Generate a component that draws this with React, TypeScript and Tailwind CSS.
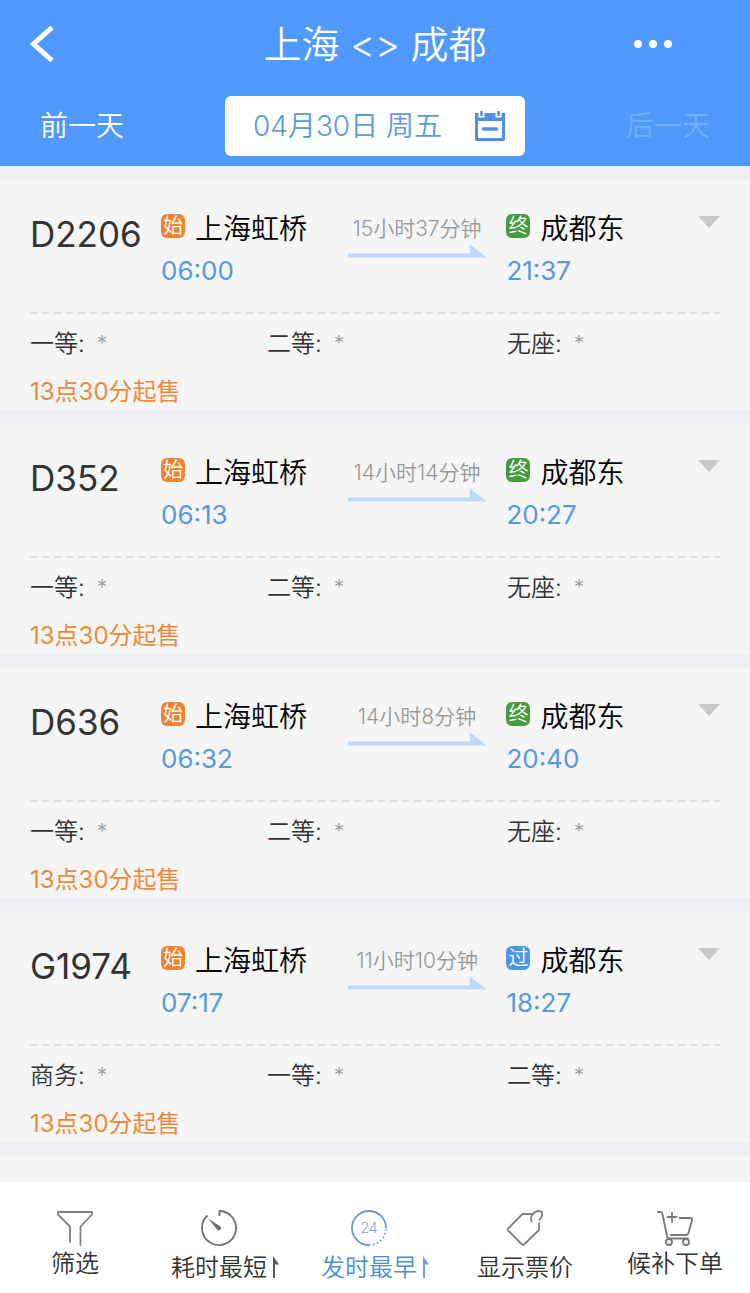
import type { ReactNode } from 'react';

type Train = {
  code: string;
  from: string;
  depart: string;
  duration: string;
  stop: '终' | '过';
  to: string;
  arrive: string;
  seats: string[];
};

const trains: Train[] = [
  { code: 'D2206', from: '上海虹桥', depart: '06:00', duration: '15小时37分钟', stop: '终', to: '成都东', arrive: '21:37', seats: ['一等', '二等', '无座'] },
  { code: 'D352', from: '上海虹桥', depart: '06:13', duration: '14小时14分钟', stop: '终', to: '成都东', arrive: '20:27', seats: ['一等', '二等', '无座'] },
  { code: 'D636', from: '上海虹桥', depart: '06:32', duration: '14小时8分钟', stop: '终', to: '成都东', arrive: '20:40', seats: ['一等', '二等', '无座'] },
  { code: 'G1974', from: '上海虹桥', depart: '07:17', duration: '11小时10分钟', stop: '过', to: '成都东', arrive: '18:27', seats: ['商务', '一等', '二等'] },
];

function Badge({ color, children }: { color: string; children: ReactNode }) {
  return (
    <span className={`mb-1.5 flex h-6 w-6 shrink-0 items-center justify-center rounded-md text-xl leading-6 text-white ${color}`}>
      {children}
    </span>
  );
}

function Station({ badge, color, name, time }: { badge: string; color: string; name: string; time: string }) {
  return (
    <div>
      <div className="flex h-[42px] items-center gap-2.5">
        <Badge color={color}>{badge}</Badge>
        <span className="whitespace-nowrap text-[28px] leading-10 text-black">{name}</span>
      </div>
      <div className="mt-px text-[26px] leading-10 font-normal text-[#5699e0]">{time}</div>
    </div>
  );
}

function TrainCard({ train }: { train: Train }) {
  return (
    <li className="bg-[#f5f5f5] px-[30px] pt-7 pb-0.5">
      <div className="grid grid-cols-[131px_187fr_159fr_214fr]">
        <h2 className="mt-1.5 text-[35px] leading-10 font-normal text-[#333]">{train.code}</h2>
        <Station badge="始" color="bg-[#ec8434]" name={train.from} time={train.depart} />
        <div className="mr-5 flex flex-col items-center pt-1.5">
          <span className="whitespace-nowrap text-[21px] leading-[30px] text-[#999]">{train.duration}</span>
          <svg className="h-[14px] w-full" viewBox="0 0 139 14" preserveAspectRatio="none" fill="#c0d9f9" aria-hidden="true">
            <path d="M0 9.500H122V0L139 13.500H0z" />
          </svg>
        </div>
        <div className="flex justify-between">
          <Station
            badge={train.stop}
            color={train.stop === '终' ? 'bg-[#469a40]' : 'bg-[#4f94e6]'}
            name={train.to}
            time={train.arrive}
          />
          <button type="button" aria-label="展开" className="mt-2 h-3 w-[22px]">
            <svg className="h-3 w-[22px]" viewBox="0 0 22 12" fill="#c8c8c8">
              <path d="M0 0h22L11 12z" />
            </svg>
          </button>
        </div>
      </div>

      <div className="mt-[21px] h-0.5 bg-[repeating-linear-gradient(to_right,#dfdfdf_0_7px,transparent_7px_12px)]" />

      <ul className="mt-3.5 grid grid-cols-[237fr_240fr_213fr]">
        {train.seats.map((seat) => (
          <li key={seat} className="flex gap-3 text-2xl leading-8 text-[#333]">
            <span>{seat}:</span>
            <span className="text-[21px] leading-8 text-[#999]">*</span>
          </li>
        ))}
      </ul>
      <p className="mt-4 text-2xl leading-8 font-normal text-[#ec8a3c]">13点30分起售</p>
    </li>
  );
}

function SortMark() {
  return (
    <svg className="mb-3 h-[22px] w-1.5 opacity-80" viewBox="0 0 6 22" fill="currentColor" aria-hidden="true">
      <path d="M0 0l6 8.500H2V22H0z" />
    </svg>
  );
}

function NavItem({ icon, label, active, sort, compact }: { icon: ReactNode; label: string; active?: boolean; sort?: boolean; compact?: boolean }) {
  return (
    <button type="button" className={`flex items-end justify-center gap-1.5 self-start pt-7 ${active ? 'text-[#4c8ddc]' : 'text-[#333]'}`}>
      <span className="flex flex-col items-center">
        {icon}
        <span className={`whitespace-nowrap text-2xl ${compact ? 'leading-9' : 'leading-[44px]'}`}>{label}</span>
      </span>
      {sort && <SortMark />}
    </button>
  );
}

const iconClass = 'h-9 w-9';

function FunnelIcon() {
  return (
    <svg className={iconClass} viewBox="0 0 36 36" fill="none" stroke="#808080" strokeWidth="1.800" strokeLinecap="round" strokeLinejoin="round">
      <path d="M13 32V16.500L1.500 5Q-0.500 2 2 2H34Q36.500 2 34.500 5L23.500 16.500V35" />
    </svg>
  );
}

function TimerIcon() {
  return (
    <svg className={iconClass} viewBox="0 0 36 36" fill="none" stroke="#707070" strokeWidth="1.800">
      <path d="M18.500 6V1A17 17 0 1 1 6.500 5.500" />
      <path d="M7 8.500L16 19.500A2.300 2.300 0 1 0 19.500 16.500z" fill="#707070" stroke="none" />
    </svg>
  );
}

function ClockIcon() {
  return (
    <svg className={iconClass} viewBox="0 0 36 36" fill="none" stroke="#6d96dc" strokeWidth="1.800">
      <path d="M35 18A17 17 0 1 0 18 35" />
      <path d="M18 35A17 17 0 0 0 35 18" strokeDasharray="1.500 2.500" />
      <text x="18" y="23" textAnchor="middle" fontSize="14" fill="#7d9fdf" stroke="none">24</text>
    </svg>
  );
}

function TagIcon() {
  return (
    <svg className={iconClass} viewBox="0 0 36 36" fill="none" stroke="#808080" strokeWidth="1.800" strokeLinecap="round" strokeLinejoin="round">
      <path d="M25.500 4H15.500L1.500 18Q0 19.500 1.500 21L14.500 34Q16 35.500 17.500 34L32 20V13" />
      <path d="M24.500 11.500C22.500 7 27 1 31.500 1C36 1 36.500 6 32.500 9.500" />
    </svg>
  );
}

function CartIcon() {
  return (
    <svg className={iconClass} viewBox="0 0 36 36" fill="none" stroke="#777" strokeWidth="1.800" strokeLinecap="round" strokeLinejoin="round">
      <path d="M1 2H3.500Q5 2 5.500 4L10 26Q10.500 28.500 12 28.500H31" />
      <path d="M22.500 8H33Q35.500 8 35 10L31.500 23Q31 25 29 25H14" />
      <path d="M15 2.500V12M10.500 7H19.500" />
      <circle cx="12" cy="32" r="3" />
      <circle cx="29" cy="32" r="3" />
    </svg>
  );
}

export default function App() {
  return (
    <div className="flex min-h-screen flex-col bg-[#eeeef3] font-['Inter','Noto_Sans_CJK_SC',sans-serif] font-[350]">
      {/* Header */}
      <header className="bg-[#4f99ff] pb-2.5 text-white">
        <div className="grid h-[88px] grid-cols-[1fr_auto_1fr] items-center px-[30px]">
          <button type="button" aria-label="返回" className="justify-self-start">
            <svg className="h-9 w-6" viewBox="0 0 24 36" fill="none" stroke="currentColor" strokeWidth="5">
              <path d="M22 1.500L3.500 18L22 34.500" />
            </svg>
          </button>
          <h1 className="whitespace-nowrap text-[38px] leading-[56px]">上海 &lt;&gt; 成都</h1>
          <button type="button" aria-label="更多" className="mr-12 flex gap-[7px] justify-self-end">
            <span className="h-2 w-2 rounded-full bg-white" />
            <span className="h-2 w-2 rounded-full bg-white" />
            <span className="h-2 w-2 rounded-full bg-white" />
          </button>
        </div>
        <div className="mt-2 flex items-center justify-between px-10 text-[28px]">
          <button type="button">前一天</button>
          <button type="button" className="flex h-[60px] w-[300px] items-center justify-between rounded-md bg-white pr-[19px] pl-7 text-[#5b9ae0]">
            <span className="whitespace-nowrap">04月30日 周五</span>
            <svg className="h-8 w-8" viewBox="0 0 32 32" fill="none" stroke="#4f90e0" aria-hidden="true">
              <path d="M2.500 5V29.500H29.500V5" strokeWidth="3" strokeLinejoin="round" />
              <path d="M1 3H4.500V7.500H10.500V3H21.500V7.500H27.500V3H31V11H1z" fill="#4f90e0" stroke="none" />
              <path d="M7.500 1V6M24.500 1V6" strokeWidth="2.500" />
              <path d="M9.500 19H22.500" strokeWidth="3.500" strokeLinecap="round" />
            </svg>
          </button>
          <button type="button" disabled className="text-[#76b0fd]">后一天</button>
        </div>
      </header>

      {/* Train list */}
      <main className="flex flex-1 flex-col gap-3.5 pt-3.5">
        <ul className="flex flex-col gap-3.5">
          {trains.map((train) => (
            <TrainCard key={train.code} train={train} />
          ))}
        </ul>
        <div className="min-h-[24px] flex-1 bg-[#f5f5f5]" />
      </main>

      {/* Bottom bar */}
      <nav className="grid h-[111px] grid-cols-5 bg-white">
        <NavItem icon={<FunnelIcon />} label="筛选" compact />
        <NavItem icon={<TimerIcon />} label="耗时最短" sort />
        <NavItem icon={<ClockIcon />} label="发时最早" sort active />
        <NavItem icon={<TagIcon />} label="显示票价" />
        <NavItem icon={<CartIcon />} label="候补下单" compact />
      </nav>
    </div>
  );
}
